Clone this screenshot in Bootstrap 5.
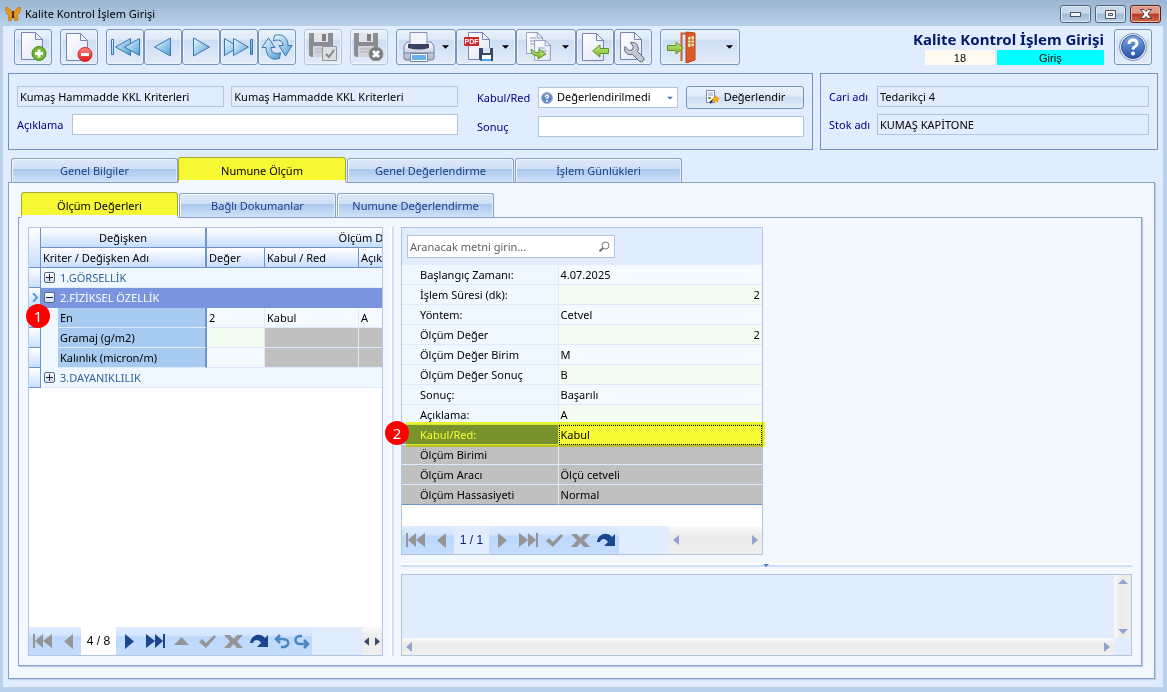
<!DOCTYPE html>
<html lang="tr">
<head>
<meta charset="utf-8">
<meta name="viewport" content="width=device-width, initial-scale=1">
<title>Kalite Kontrol İşlem Girişi</title>
<link href="https://cdn.jsdelivr.net/npm/bootstrap@5.3.0/dist/css/bootstrap.min.css" rel="stylesheet">
<script src="https://cdn.jsdelivr.net/npm/bootstrap@5.3.0/dist/js/bootstrap.bundle.min.js"></script>
<style>
:root{--face:#e1edfe;--pale:#f3f7fe;--line:#6d93c9;--soft:#b1c5e0;--navy:#000080;--ui:"Noto Sans","Open Sans",sans-serif}
body{font-family:var(--ui);font-size:11px;line-height:16px;color:#000;background:#b9d1ea}
svg{display:block;flex:none}
.titlebar{height:26px;background:linear-gradient(#9bb5d2,#b8d0e9);padding:1px 6px 0 5px}
.winbtn{width:31px;height:18px;padding:0;border:1px solid #52677f;border-radius:3px;background:linear-gradient(#c9d9ea 45%,#9fb9d4 50%,#bdd3ea);box-shadow:inset 0 0 0 1px #dce9f5;display:grid;place-items:center}
.winbtn.close-app{border-color:#5c2020;background:linear-gradient(#dd9c8c 45%,#bb3a22 50%,#cf6a48);box-shadow:inset 0 0 0 1px #e8b5a8}
.frame-body{background:var(--face);margin:0 4px 5px 3px}
.toolbar{padding:3px 11px 8px}
.tool{width:38px;height:36px;padding:0;border:1px solid #7694be;border-radius:3px;background:linear-gradient(#e9f2fc,#dfeaf8 27%,#cddef2 30%,#e2ecfa);box-shadow:inset 0 0 0 1px #edf4fc;display:flex;align-items:center;justify-content:center}
.tool-drop{width:60px;justify-content:space-between;padding:0 6px}
.tool-exit{width:80px}
.tool:disabled{border-color:#b4c6df}
.tool:disabled svg{opacity:.85}
.headline{gap:10px}
.big-name{font-size:15px;line-height:21px;font-weight:700;color:#001b6b}
.chips{gap:2px}
.chip{height:15px;font:11px/16px "Liberation Sans",sans-serif;text-align:center}
.chip-no{flex:70 1 0;margin-left:12px;background:#fffbf0}
.chip-kind{flex:108 1 0;background:#0ff}
.groups{display:grid;grid-template-columns:805fr 338fr;gap:7px;padding:0 5px}
.group-box{border:1px solid var(--line);padding:12px 8px 12px}
.split-form{display:grid;grid-template-columns:441fr 327fr;gap:19px}
.stack{display:flex;flex-direction:column;gap:7px}
.stack>div{display:flex;align-items:center}
.group-box label{color:var(--navy);white-space:nowrap;flex:none}
.lab-s{width:48px}.lab-m{width:55px}.lab-l{width:61px}
.field{height:21px;border:1px solid var(--soft);border-radius:0;padding:0 2px 1px;background:#fff;color:#000;min-width:0;outline:0;font:11px/16px var(--ui)}
.field[readonly]{background:var(--face)}
select.field{display:block;appearance:none;width:100%;padding-left:18px}
.over-left,.over-right{position:absolute;pointer-events:none}
.over-left{left:3px;top:5px}.over-right{right:5px;top:9px}
.eval-btn{height:23px;width:118px;padding:0 0 1px;border:1px solid #7694be;border-radius:3px;background:linear-gradient(#e9f2fc,#dfeaf8 45%,#cddef2 50%,#e2ecfa);font:11px/16px var(--ui);color:#000}
.tabset{border:0;gap:1px;padding:0 3px;position:relative;z-index:1;margin-bottom:-1px;align-items:flex-end;height:26px}
.tabset.outer{margin-top:7px;padding-left:8px}
.tabset .nav-link{width:167px;height:24px;margin:0 0 1px;padding:3px 0 0;border:1px solid #8aa0c8;border-bottom:0;border-radius:3px 3px 0 0;background:linear-gradient(#dfeaf9,#cfdff5 42%,#aac7ec 44%,#cfe1f9);box-shadow:inset 1px 1px 0 #f1f6fd,inset -1px 0 0 #e4eefb;color:#1b3f86;font-size:11px;line-height:18px;text-align:center}
.tabset .nav-link.active{height:26px;margin:0 0 0 -1px;background:#f5f832;border:1px solid #a4a93a;border-bottom:3px solid var(--pale);box-shadow:none;color:#000;padding-top:4px;width:168px}
.tabset.inner .nav-link,.tabset.inner .nav-link.active{width:157px;margin-left:0}
.sheet{border:1px solid #8aa0c8;background:var(--pale);box-shadow:1px 1px 1px #b9cce9}
.outer-sheet{margin:0 8px 8px 5px;padding:9px 12px 12px 9px}
.inner-sheet{padding:9px}
.work{display:grid;grid-template-columns:355fr 18px 731fr;min-height:0}
.vsplit{width:4px;margin:0 auto;background:linear-gradient(90deg,#fff 50%,#cbdffa 50%)}
.hsplit{height:19px;position:relative;display:flex;align-items:center}
.hsplit>div{height:4px;width:100%;background:linear-gradient(#fff 50%,#cbdffa 50%)}
.hsplit svg{position:absolute;left:49.500%;top:9px}
.pane{border:1px solid var(--soft);background:#fff;position:relative;min-width:0}
.clip{overflow:hidden}
.grid-table{table-layout:fixed;border-collapse:separate;border-spacing:0;white-space:nowrap}
.grid-table th,.grid-table td{height:20px;padding:0 2px;font-weight:400;line-height:16px;overflow:hidden}
.crit{width:527px}
.crit th{background:linear-gradient(#fff,#c7defd);border-bottom:1px solid var(--line);border-right:1px solid var(--line)}
.crit .edge{border-right:2px solid var(--line)}
.crit td{border-bottom:1px solid #deebfd;border-right:1px solid #deebfd;background:#f5fafe}
.crit .grp{background:#f0f8ff;color:#32629f}
.crit .sel td{background:#7b94e0;color:#fff;border-color:#7b94e0}
.crit td.name{background:#a6caf0}
.crit td.name.edge{border-right-color:var(--line)}
.crit td.off{background:#c0c0c0}
.crit td.even{background:#f4fcf2}
.crit td.step{background:#f0f8ff;border:0}
.node{display:flex;align-items:center;gap:5px;padding-left:1px}
.toggle{width:11px;height:11px;padding:0;border:1px solid #5a6a85;border-radius:2px;background:linear-gradient(#fff,#cfdcee);display:grid;place-items:center}
.props{width:100%}
.props th,.props td{border-bottom:1px solid #deebfd;background:#f0f8ff}
.props th{padding-left:18px;border-right:1px solid #deebfd}
.props td{background:#f5fafe}
.props tr:nth-child(even) td{background:#f4fcf2}
.props tr.off th,.props tr.off td{background:#c0c0c0}
.props tr:last-child th,.props tr:last-child td{border-bottom-color:var(--line)}
.props tr.now th{background:#7b94e0;color:#fff}
.props tr.now td{background:#fff;outline:1px dotted #000;outline-offset:-1px}
.glow{position:absolute;left:4px;right:-3px;height:25px;background:#f8fc32;mix-blend-mode:multiply;pointer-events:none;bottom:58px}
.marker{position:absolute;width:24px;height:24px;border-radius:50%;background:#f00;color:#fff;font:15px/24px "Noto Sans",sans-serif;text-align:center;z-index:2}
.search-zone{background:var(--face);height:37px;padding:7px 5px 0}
.search-box{width:208px;height:23px}
.search-box input{width:100%;height:23px}
.search-box input::placeholder{color:#5f5f5f;opacity:1}
.search-box .over-right{top:6px}
.pager{height:28px;background:var(--face)}
.pager button{width:26px;height:28px;padding:0;border:0;background:linear-gradient(#dfecff,#d3e5fe 30%,#bdd8fc 36%,#c4ddfe);display:grid;place-items:center;color:#959595}
.pager button.on{color:#1b458c}
.pager button.lite{width:20px;color:#4a86c0}
.pager span{width:35px;text-align:center;font:12px/28px "Liberation Sans",sans-serif}
.sbar{background:linear-gradient(#fafafa,#ebebeb 40%,#efefef);display:flex;justify-content:space-between;align-items:center;color:#95a2cc}
.sbar.mini{width:20px;padding:0 2px;color:#3b4a6b}
.sbar.wide{width:93px;padding:0 4px}
.sbar.tall{flex-direction:column;background:linear-gradient(90deg,#fafafa,#ebebeb 40%,#efefef)}
.memo{display:grid;grid-template-columns:1fr 17px;grid-template-rows:1fr 17px;background:var(--face)}
.memo textarea{border:0;background:var(--face);resize:none;outline:0;min-height:40px;min-width:0}
</style>
</head>
<body class="d-flex flex-column min-vh-100">
<svg width="0" height="0" class="position-absolute" aria-hidden="true">
  <defs>
    <linearGradient id="gBlue" x1="0" y1="0" x2="1" y2="1"><stop stop-color="#f0faff"/><stop offset="1" stop-color="#4e9fd8"/></linearGradient>
    <linearGradient id="gPage" x1="0" y1="0" x2="1" y2="1"><stop stop-color="#fff"/><stop offset="1" stop-color="#e2e6f5"/></linearGradient>
    <linearGradient id="gGreen" x1="0" y1="0" x2="0" y2="1"><stop stop-color="#c9e67c"/><stop offset="1" stop-color="#7cb52e"/></linearGradient>
    <linearGradient id="gRed" x1="0" y1="0" x2="0" y2="1"><stop stop-color="#ff8a7c"/><stop offset="1" stop-color="#d91620"/></linearGradient>
    <linearGradient id="gSteel" x1="0" y1="0" x2="0" y2="1"><stop stop-color="#fff"/><stop offset="1" stop-color="#a5b2cf"/></linearGradient>
    <linearGradient id="gHelp" x1="0" y1="0" x2="0" y2="1"><stop stop-color="#7fa8e6"/><stop offset="1" stop-color="#2450a4"/></linearGradient>
    <symbol id="page" viewBox="0 0 22 28"><path d="M.5.5h14l7 7v20H.5z" fill="url(#gPage)" stroke="#7884b3"/><path d="M14.500.5v7h7z" fill="#f4f6fc" stroke="#7884b3"/></symbol>
    <symbol id="floppy" viewBox="0 0 24 24"><path d="M0 0h24v24H2l-2-2z" fill="#7e7e80"/><path d="M5 0h14v9H5z" fill="#e4e4e6"/><path d="M13 1h4v7h-4z" fill="#6d6d70"/><path d="M4 13h16v11H4z" fill="#d0d0d3"/><path d="M6 16h12M6 19h12" stroke="#aaa"/></symbol>
    <symbol id="first" viewBox="0 0 19 16"><path d="M0 1h2v14H0zM10 1v14L2 8zM19 1v14l-9-7z" fill="currentColor"/></symbol>
    <symbol id="last" viewBox="0 0 19 16"><path d="M17 1h2v14h-2zM9 1v14l8-7zM0 1v14l9-7z" fill="currentColor"/></symbol>
    <symbol id="prev" viewBox="0 0 9 15"><path d="M9 0v15L0 7.500z" fill="currentColor"/></symbol>
    <symbol id="next" viewBox="0 0 9 15"><path d="M0 0v15l9-7.500z" fill="currentColor"/></symbol>
    <symbol id="tick" viewBox="0 0 19 15"><path d="M1 8l3-3 4 4 8-8 2 2L8 14z" fill="currentColor"/></symbol>
    <symbol id="cross" viewBox="0 0 19 15"><path d="M0 1h6l3.500 4L13 1h6l-6 6.500 6 6.500h-6l-3.500-4L6 14H0l6-6.500z" fill="currentColor"/></symbol>
    <symbol id="again" viewBox="0 0 19 14"><path d="M0 9C1 1 10-2 15 4l3-3v12H7l4-4C9 5 4 5 3 9z" fill="currentColor"/></symbol>
    <symbol id="undo" viewBox="0 0 16 15"><path d="M6 1L2 5l4 4M2 5h7c7 0 7 8 0 8H7" fill="none" stroke="currentColor" stroke-width="2.500"/></symbol>
    <symbol id="redo" viewBox="0 0 16 15"><path d="M8 2H6c-6 0-6 8 0 8h8M10 6l4 4-4 4" fill="none" stroke="currentColor" stroke-width="2.500"/></symbol>
    <symbol id="caret" viewBox="0 0 8 4"><path d="M0 0h8L4 4z" fill="currentColor"/></symbol>
    <symbol id="garrow" viewBox="0 0 17 14"><path d="M.5 4.500H9V.9L16.300 7 9 13.100V9.500H.5z" fill="url(#gGreen)" stroke="#5c9626"/></symbol>
  </defs>
</svg>

<header class="titlebar d-flex align-items-center">
  <svg width="16" height="16" viewBox="0 0 16 16"><path d="M7.500 6Q3 0 0 1.500L2 8l2 1-1 5 3 1 2-5 2 5 3-1-1-5 2-1 2-6.500Q13 0 8.500 6z" fill="#f29a1c" stroke="#a8640f" stroke-width=".6"/><path d="M2 3l5 5M14 3L9 8M5 13l2-4M11 13L9 9" stroke="#c87712" stroke-width=".8"/><path d="M8 5v7" stroke="#2a1a10" stroke-width="1.600"/></svg>
  <div class="ms-1 me-auto">Kalite Kontrol İşlem Girişi</div>
  <div class="d-flex gap-1 h-100 pt-1">
    <button class="winbtn" type="button" aria-label="Küçült"><svg width="11" height="5"><rect x=".5" y=".5" width="10" height="4" fill="#f2f2f2" stroke="#4c5563"/></svg></button>
    <button class="winbtn" type="button" aria-label="Büyüt"><svg width="11" height="9"><path d="M.5.5h10v8H.5zM3.500 3.500h4v2h-4z" fill="#f2f2f2" stroke="#4c5563"/></svg></button>
    <button class="winbtn close-app" type="button" aria-label="Kapat"><svg width="12" height="10" viewBox="0 0 12 10"><path d="M.5.5h3.500l2 2 2-2h3.500L8 5l3.500 4.500H8l-2-2-2 2H.5L4 5z" fill="#fff" stroke="#4d3a40"/></svg></button>
  </div>
</header>

<main class="frame-body flex-grow-1 d-flex flex-column">
  <div class="toolbar d-flex align-items-start">
    <div class="d-flex gap-2">
      <button class="tool" type="button" aria-label="Yeni"><svg width="28" height="30"><use href="#page" x="2" width="22" height="28"/><circle cx="20" cy="21.500" r="7" fill="#74b72e" stroke="#3f8420"/><path d="M20 17.500v8M16 21.500h8" stroke="#fff" stroke-width="3"/></svg></button>
      <button class="tool" type="button" aria-label="Sil"><svg width="28" height="30"><use href="#page" x="1" y="1" width="22" height="28"/><circle cx="20" cy="22.500" r="7" fill="url(#gRed)" stroke="#d02a30"/><path d="M16 22.500h8" stroke="#fff" stroke-width="3"/></svg></button>
      <div class="d-flex">
        <button class="tool" type="button" aria-label="İlk"><svg width="30" height="20" fill="url(#gBlue)" stroke="#3d77ad"><path d="M1.500 2.500h2v15h-2zM20.500 1.500v17l-15-8.500z"/><path d="M29.500 1.500v17L14.500 10z"/></svg></button>
        <button class="tool" type="button" aria-label="Önceki"><svg width="20" height="20" fill="url(#gBlue)" stroke="#3d77ad"><path d="M17.500 1v18L1.500 10z"/></svg></button>
        <button class="tool" type="button" aria-label="Sonraki"><svg width="20" height="20" fill="url(#gBlue)" stroke="#3d77ad"><path d="M2.500 1v18l16-9z"/></svg></button>
        <button class="tool" type="button" aria-label="Son"><svg width="30" height="20" fill="url(#gBlue)" stroke="#3d77ad"><path d="M26.500 2.500h2v15h-2zM.5 1.500v17l14-8.500z"/><path d="M9.500 1.500v17l15-8.500z"/></svg></button>
        <button class="tool" type="button" aria-label="Yenile"><svg width="32" height="26" fill="url(#gBlue)" stroke="#3d77ad"><path d="M13.500 1.500C22-1 27 4 27 11.500h4L24.500 22 18 11.500h4C22 6 17 5 12.500 7z"/><path d="M18.500 24.500C10 27 5 22 5 13.500H1L7.500 4 14 13.500h-4c0 6 5 7 9.500 5z"/></svg></button>
      </div>
      <button class="tool" type="button" disabled aria-label="Kaydet"><svg width="28" height="28"><use href="#floppy" width="24" height="24"/><path d="M13.500 13.500h14v14h-14z" fill="#ddd" stroke="#888"/><path d="M17 21l3 3 5-7" fill="none" stroke="#777" stroke-width="2"/></svg></button>
      <button class="tool" type="button" disabled aria-label="Vazgeç"><svg width="30" height="28"><use href="#floppy" width="24" height="24"/><circle cx="22" cy="21" r="7" fill="#666" stroke="#8a8a8a"/><path d="M19 18l6 6M25 18l-6 6" stroke="#fff" stroke-width="3"/></svg></button>
      <div class="d-flex">
        <button class="tool tool-drop" type="button" aria-label="Yazdır"><svg width="32" height="30"><path d="M4 10h24l3 4v12q0 2-2 2H3q-2 0-2-2V14z" fill="url(#gSteel)" stroke="#7580a3"/><path d="M7 .5h17v12H7z" fill="#f3f5fc" stroke="#8891b2"/><path d="M5 12h21v4q-10 3-21 0z" fill="#39435f"/><path d="M1 21h30" stroke="#7580a3"/><path d="M7.500 21.500h17v8h-17z" fill="#fff" stroke="#7580a3"/><path d="M9 23h14v5H9z" fill="#65b3ea"/></svg><svg width="7" height="4"><use href="#caret"/></svg></button>
        <button class="tool tool-drop" type="button" aria-label="PDF kaydet"><svg width="32" height="30"><use href="#page" x="5" width="22" height="28"/><rect x="1" y="5" width="15" height="9" rx="1" fill="#cf252c"/><text x="1.500" y="12" font-family="Liberation Sans" font-weight="700" font-size="7" fill="#fff">PDF</text><path d="M16 16h14v13H18l-2-2z" fill="#394869"/><path d="M20 16h7v5h-7z" fill="#dce4f3"/><path d="M19 23h9v6h-9z" fill="#fff"/><path d="M19 27h9v2h-9z" fill="#4ba8ed"/></svg><svg width="7" height="4"><use href="#caret"/></svg></button>
        <button class="tool tool-drop" type="button" aria-label="Kopyala"><svg width="32" height="30"><use href="#page" x="3" width="17" height="22"/><path d="M7 6h6M7 9h8M7 12h6" stroke="#8899c6"/><use href="#page" x="11" y="8" width="17" height="21"/><path d="M15 16h7M15 19h9" stroke="#8899c6"/><path d="M8 17q3 4 8 4v-4l7 5-8 5v-3q-7 0-7-7z" fill="url(#gGreen)" stroke="#5c9626"/></svg><svg width="7" height="4"><use href="#caret"/></svg></button>
        <button class="tool" type="button" aria-label="Al"><svg width="30" height="30"><use href="#page" x="2" y="1" width="22" height="28"/><use href="#garrow" x="-29" y="12" width="17" height="14" transform="scale(-1 1)"/></svg></button>
        <button class="tool" type="button" aria-label="Ayarlar"><svg width="28" height="32"><use href="#page" x="1" y="1" width="22" height="28"/><path d="M11.500 11.500q5-1 7 3t0 6l6 6q1.500 2-.5 3.500t-3.500.5l-7-7q-5 1-7.500-3-1-3 0-5l4 4 3-.5 1.500-3z" fill="#bfc6d6" stroke="#5f6981"/></svg></button>
      </div>
      <button class="tool tool-drop tool-exit" type="button" aria-label="Çıkış"><svg width="30" height="32"><path d="M14.500 30V2.500H19" fill="none" stroke="#cf5930" stroke-width="2"/><path d="M19 1l9 1v27l-9 3z" fill="#da5829" stroke="#b8431c"/><path d="M21 6l6-1v10l-6 1z" fill="#e6dfae"/><path d="M24 5v11M21 9h6M21 12h6" stroke="#b77438"/><use href="#garrow" y="10" width="17" height="14"/></svg><svg width="7" height="4"><use href="#caret"/></svg></button>
    </div>
    <div class="headline ms-auto d-flex align-items-start">
      <div>
        <div class="big-name">Kalite Kontrol İşlem Girişi</div>
        <div class="chips d-flex">
          <div class="chip chip-no">18</div>
          <div class="chip chip-kind">Giriş</div>
        </div>
      </div>
      <button class="tool" type="button" aria-label="Yardım"><svg width="28" height="28"><circle cx="14" cy="14" r="13.500" fill="#f3f6fc" stroke="#7f8fb8"/><circle cx="14" cy="14" r="11.500" fill="url(#gHelp)" stroke="#2d549f"/><path d="M10 11q0-4 4-4t4 3.500q0 2-2 3t-2 3" fill="none" stroke="#fff" stroke-width="3"/><circle cx="14" cy="20.500" r="2" fill="#fff"/></svg></button>
    </div>
  </div>

  <div class="groups">
    <section class="group-box split-form">
      <div class="stack">
        <div style="gap:7px">
          <input class="field" style="flex:207 1 0" readonly value="Kumaş Hammadde KKL Kriterleri" aria-label="Kriter kodu">
          <input class="field" style="flex:227 1 0" readonly value="Kumaş Hammadde KKL Kriterleri" aria-label="Kriter adı">
        </div>
        <div><label class="lab-m" for="aciklama">Açıklama</label><input id="aciklama" class="field flex-grow-1"></div>
      </div>
      <div class="stack">
        <div>
          <label class="lab-l" for="kabul">Kabul/Red</label>
          <div class="position-relative flex-grow-1 me-2">
            <select id="kabul" class="field"><option>Değerlendirilmedi</option></select>
            <svg class="over-left" width="12" height="12"><circle cx="6" cy="6" r="5.500" fill="#6088cc" stroke="#a9b4c9"/><path d="M4.500 5q0-2 1.500-2t1.500 1.500Q7.500 5.500 6 6v1" fill="none" stroke="#fff" stroke-width="1.500"/><circle cx="6" cy="9" r="1" fill="#fff"/></svg>
            <svg class="over-right" width="6" height="4" viewBox="0 0 8 4" style="color:#3f6fae"><use href="#caret"/></svg>
          </div>
          <button class="eval-btn d-flex align-items-center justify-content-center gap-1" type="button"><svg width="15" height="15"><path d="M1.500.5h8v12h-8z" fill="#fff" stroke="#7884b3"/><path d="M3 3h5M3 5h5" stroke="#8899c6"/><path d="M3 8h3" stroke="#6fae3c" stroke-width="2"/><path d="M5 13l6-6" stroke="#333" stroke-width="2"/><path d="M11 5l1 2 3 1-2 2v3l-3-2-3 1 1-4z" fill="#f7a41e"/></svg>Değerlendir</button>
        </div>
        <div><label class="lab-l" for="sonuc">Sonuç</label><input id="sonuc" class="field flex-grow-1"></div>
      </div>
    </section>
    <section class="group-box stack">
      <div><label class="lab-s" for="cari">Cari adı</label><input id="cari" class="field flex-grow-1" readonly value="Tedarikçi 4"></div>
      <div><label class="lab-s" for="stok">Stok adı</label><input id="stok" class="field flex-grow-1" readonly value="KUMAŞ KAPİTONE"></div>
    </section>
  </div>

  <nav class="nav nav-tabs tabset outer">
    <a class="nav-link" href="#">Genel Bilgiler</a>
    <a class="nav-link active" href="#">Numune Ölçüm</a>
    <a class="nav-link" href="#">Genel Değerlendirme</a>
    <a class="nav-link" href="#">İşlem Günlükleri</a>
  </nav>
  <div class="sheet outer-sheet flex-grow-1 d-flex flex-column">
    <nav class="nav nav-tabs tabset inner">
      <a class="nav-link active" href="#">Ölçüm Değerleri</a>
      <a class="nav-link" href="#">Bağlı Dokumanlar</a>
      <a class="nav-link" href="#">Numune Değerlendirme</a>
    </nav>
    <div class="sheet inner-sheet flex-grow-1 d-flex flex-column">
      <div class="work flex-grow-1">
        <section class="pane">
          <div class="h-100 d-flex flex-column clip">
            <div class="flex-grow-1">
              <table class="grid-table crit">
                <colgroup><col style="width:12px"><col style="width:17px"><col style="width:149px"><col style="width:58px"><col style="width:94px"><col></colgroup>
                <thead>
                  <tr><th rowspan="2"></th><th colspan="2" class="edge text-center">Değişken</th><th colspan="3" class="text-center">Ölçüm Değerleri</th></tr>
                  <tr><th colspan="2" class="edge">Kriter / Değişken Adı</th><th>Değer</th><th>Kabul / Red</th><th>Açıklama</th></tr>
                </thead>
                <tbody>
                  <tr><th></th><td colspan="5" class="grp"><div class="node"><button class="toggle" type="button" aria-label="Aç"><svg width="7" height="7"><path d="M0 3.500h7M3.500 0v7" stroke="#223"/></svg></button><span>1.GÖRSELLİK</span></div></td></tr>
                  <tr class="sel"><th class="p-0"><svg width="11" height="9"><path d="M4 0l4 4.500L4 9" fill="none" stroke="#5c9ae0" stroke-width="2"/></svg></th><td colspan="5"><div class="node"><button class="toggle" type="button" aria-label="Kapat"><svg width="7" height="7"><path d="M0 3.500h7" stroke="#223"/></svg></button><span>2.FİZİKSEL ÖZELLİK</span></div></td></tr>
                  <tr><th></th><td class="step"></td><td class="name edge">En</td><td>2</td><td>Kabul</td><td>A</td></tr>
                  <tr><th></th><td class="step"></td><td class="name edge">Gramaj (g/m2)</td><td class="even"></td><td class="off"></td><td class="off"></td></tr>
                  <tr><th></th><td class="step"></td><td class="name edge">Kalınlık (micron/m)</td><td></td><td class="off"></td><td class="off"></td></tr>
                  <tr><th></th><td colspan="5" class="grp"><div class="node"><button class="toggle" type="button" aria-label="Aç"><svg width="7" height="7"><path d="M0 3.500h7M3.500 0v7" stroke="#223"/></svg></button><span>3.DAYANIKLILIK</span></div></td></tr>
                </tbody>
              </table>
            </div>
            <div class="pager d-flex">
              <button type="button" aria-label="İlk"><svg width="19" height="16"><use href="#first"/></svg></button>
              <button type="button" aria-label="Önceki"><svg width="9" height="15"><use href="#prev"/></svg></button>
              <span class="bg-white">4 / 8</span>
              <button class="on" type="button" aria-label="Sonraki"><svg width="9" height="15"><use href="#next"/></svg></button>
              <button class="on" type="button" aria-label="Son"><svg width="19" height="16"><use href="#last"/></svg></button>
              <button type="button" aria-label="Düzenle"><svg width="15" height="8"><path d="M0 8l7.500-8L15 8z" fill="currentColor"/></svg></button>
              <button type="button" aria-label="Onayla"><svg width="19" height="15"><use href="#tick"/></svg></button>
              <button type="button" aria-label="İptal"><svg width="19" height="15"><use href="#cross"/></svg></button>
              <button class="on" type="button" aria-label="Yenile"><svg width="19" height="14"><use href="#again"/></svg></button>
              <button class="lite" type="button" aria-label="Geri al"><svg width="16" height="15"><use href="#undo"/></svg></button>
              <button class="lite" type="button" aria-label="Yinele"><svg width="16" height="15"><use href="#redo"/></svg></button>
              <div class="sbar mini ms-auto"><svg width="5" height="9" viewBox="0 0 9 15"><use href="#prev"/></svg><svg width="5" height="9" viewBox="0 0 9 15"><use href="#next"/></svg></div>
            </div>
          </div>
          <div class="marker" style="left:-3px;top:76px">1</div>
        </section>
        <div class="vsplit"></div>
        <section class="d-flex flex-column" style="min-width:0">
          <div class="pane" style="width:49.500%">
            <div class="search-zone"><div class="search-box position-relative"><input class="field" type="text" placeholder="Aranacak metni girin..." aria-label="Ara"><svg class="over-right" width="11" height="11"><circle cx="6.500" cy="4.500" r="3.500" fill="none" stroke="#777"/><path d="M4 7L.5 10.500" stroke="#777" stroke-width="2"/></svg></div></div>
            <div class="position-relative">
              <table class="grid-table props">
                <colgroup><col style="width:43.500%"><col></colgroup>
                <tbody>
                  <tr><th>Başlangıç Zamanı:</th><td>4.07.2025</td></tr>
                  <tr><th>İşlem Süresi (dk):</th><td class="text-end">2</td></tr>
                  <tr><th>Yöntem:</th><td>Cetvel</td></tr>
                  <tr><th>Ölçüm Değer</th><td class="text-end">2</td></tr>
                  <tr><th>Ölçüm Değer Birim</th><td>M</td></tr>
                  <tr><th>Ölçüm Değer Sonuç</th><td>B</td></tr>
                  <tr><th>Sonuç:</th><td>Başarılı</td></tr>
                  <tr><th>Açıklama:</th><td>A</td></tr>
                  <tr class="now"><th>Kabul/Red:</th><td>Kabul</td></tr>
                  <tr class="off"><th>Ölçüm Birimi</th><td></td></tr>
                  <tr class="off"><th>Ölçüm Aracı</th><td>Ölçü cetveli</td></tr>
                  <tr class="off"><th>Ölçüm Hassasiyeti</th><td>Normal</td></tr>
                </tbody>
              </table>
              <div class="glow"></div>
              <div class="marker" style="left:-17px;bottom:60px">2</div>
            </div>
            <div class="pager d-flex" style="margin-top:21px">
              <button type="button" aria-label="İlk"><svg width="19" height="16"><use href="#first"/></svg></button>
              <button type="button" aria-label="Önceki"><svg width="9" height="15"><use href="#prev"/></svg></button>
              <span style="color:#001b6b">1 / 1</span>
              <button type="button" aria-label="Sonraki"><svg width="9" height="15"><use href="#next"/></svg></button>
              <button type="button" aria-label="Son"><svg width="19" height="16"><use href="#last"/></svg></button>
              <button type="button" aria-label="Onayla"><svg width="19" height="15"><use href="#tick"/></svg></button>
              <button type="button" aria-label="İptal"><svg width="19" height="15"><use href="#cross"/></svg></button>
              <button class="on" type="button" aria-label="Yenile"><svg width="19" height="14"><use href="#again"/></svg></button>
              <div class="sbar wide ms-auto"><svg width="6" height="10" viewBox="0 0 9 15"><use href="#prev"/></svg><svg width="6" height="10" viewBox="0 0 9 15"><use href="#next"/></svg></div>
            </div>
          </div>
          <div class="hsplit"><div></div><svg width="6" height="3" viewBox="0 0 8 4" style="color:#4f7fc4"><use href="#caret"/></svg></div>
          <div class="pane memo flex-grow-1">
            <textarea readonly aria-label="Not"></textarea>
            <div class="sbar tall py-1"><svg width="10" height="5"><path d="M0 5l5-5 5 5z" fill="currentColor"/></svg><svg width="10" height="5"><path d="M0 0h10L5 5z" fill="currentColor"/></svg></div>
            <div class="sbar px-1"><svg width="6" height="10" viewBox="0 0 9 15"><use href="#prev"/></svg><svg width="6" height="10" viewBox="0 0 9 15"><use href="#next"/></svg></div>
          </div>
        </section>
      </div>
    </div>
  </div>
</main>
</body>
</html>
